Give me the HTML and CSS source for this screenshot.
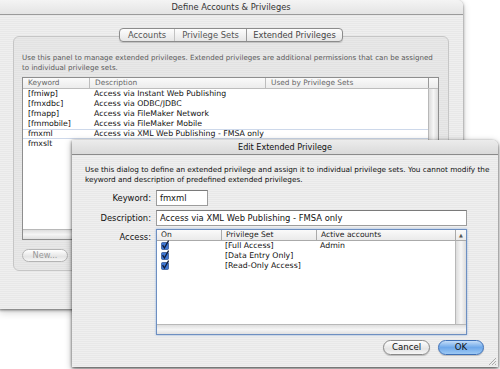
FILE: index.html
```html
<!DOCTYPE html>
<html lang="en">
<head>
<meta charset="UTF-8">
<title>Define Accounts &amp; Privileges</title>
<link rel="stylesheet" href="styles.css">
</head>
<body>
<div class="desk">

  <!-- back window -->
  <div class="window main">
    <div class="titlebar">Define Accounts &amp; Privileges</div>
    <div class="win-body">
      <div class="tabs">
        <span class="tab">Accounts</span>
        <span class="tab">Privilege Sets</span>
        <span class="tab on">Extended Privileges</span>
      </div>
      <div class="tabbox">
        <p class="intro">Use this panel to manage extended privileges. Extended privileges are additional permissions that can be assigned<br>to individual privilege sets.</p>
        <div class="list">
          <div class="list-head">
            <span>Keyword</span><span>Description</span><span>Used by Privilege Sets</span><span class="sb"></span>
          </div>
          <div class="list-body">
            <div class="rows">
              <div class="row"><span>[fmiwp]</span><span>Access via Instant Web Publishing</span><span></span></div>
              <div class="row"><span>[fmxdbc]</span><span>Access via ODBC/JDBC</span><span></span></div>
              <div class="row"><span>[fmapp]</span><span>Access via FileMaker Network</span><span></span></div>
              <div class="row"><span>[fmmobile]</span><span>Access via FileMaker Mobile</span><span></span></div>
              <div class="row sel"><span>fmxml</span><span>Access via XML Web Publishing - FMSA only</span><span></span></div>
              <div class="row"><span>fmxslt</span><span></span><span></span></div>
            </div>
            <div class="vtrack"></div>
          </div>
          <div class="hscroll"></div>
        </div>
        <span class="btn off">New...</span>
      </div>
    </div>
  </div>

  <!-- sheet dialog -->
  <div class="window dialog">
    <div class="titlebar">Edit Extended Privilege</div>
    <div class="dlg-body">
      <p class="intro">Use this dialog to define an extended privilege and assign it to individual privilege sets. You cannot modify the<br>keyword and description of predefined extended privileges.</p>
      <div class="form">
        <label>Keyword:</label>
        <span class="field short">fmxml</span>
        <label>Description:</label>
        <span class="field">Access via XML Web Publishing - FMSA only</span>
        <label class="top">Access:</label>
        <div class="grid-tbl">
          <div class="gt-head">
            <span>On</span><span>Privilege Set</span><span>Active accounts</span><span class="arrow">&#9650;</span>
          </div>
          <div class="gt-body">
            <div class="gt-rows">
              <div class="gt-row"><span><svg class="chk" viewBox="0 0 8 10" width="8" height="10"><rect x="0.5" y="2.5" width="7" height="7" rx="1" fill="#3f78d4" stroke="#1d3d78" stroke-width="0.6"/><path d="M1.6 5.2 L3.4 8 L7.6 0.6" fill="none" stroke="#101c3a" stroke-width="1.3"/></svg></span><span>[Full Access]</span><span>Admin</span></div>
              <div class="gt-row"><span><svg class="chk" viewBox="0 0 8 10" width="8" height="10"><rect x="0.5" y="2.5" width="7" height="7" rx="1" fill="#3f78d4" stroke="#1d3d78" stroke-width="0.6"/><path d="M1.6 5.2 L3.4 8 L7.6 0.6" fill="none" stroke="#101c3a" stroke-width="1.3"/></svg></span><span>[Data Entry Only]</span><span></span></div>
              <div class="gt-row"><span><svg class="chk" viewBox="0 0 8 10" width="8" height="10"><rect x="0.5" y="2.5" width="7" height="7" rx="1" fill="#3f78d4" stroke="#1d3d78" stroke-width="0.6"/><path d="M1.6 5.2 L3.4 8 L7.6 0.6" fill="none" stroke="#101c3a" stroke-width="1.3"/></svg></span><span>[Read-Only Access]</span><span></span></div>
            </div>
            <div class="vtrack"></div>
          </div>
          <div class="hscroll"></div>
        </div>
      </div>
      <div class="actions">
        <span class="btn">Cancel</span>
        <span class="btn default">OK</span>
      </div>
    </div>
    <svg class="grip" viewBox="0 0 9 9" width="9" height="9"><path d="M1 8 L8 1 M4 8 L8 4 M7 8 L8 7" stroke="#999" stroke-width="0.8"/></svg>
  </div>

</div>
</body>
</html>
```

FILE: styles.css
```css
* {
    box-sizing: border-box;
}

body {
    margin: 0;
    background: #fff;
    font-family: "DejaVu Sans", sans-serif;
    font-size: 7.6px;
    color: #111;
}

.desk {
    position: relative;
    width: 500px;
    height: 369px;
    overflow: hidden;
}

/* windows */
.window {
    position: absolute;
    display: flex;
    flex-direction: column;
    background: repeating-linear-gradient(#efefef 0 1px, #e8e8e8 1px 2px);
}

.main {
    left: -1px;
    top: 0;
    width: 464px;
    height: 309px;
    border-radius: 0 6px 0 0;
    box-shadow: 0 1px 3px rgba(0,0,0,0.55), 0 3px 8px rgba(0,0,0,0.2);
}

.dialog {
    left: 72px;
    top: 140px;
    width: 426px;
    height: 227px;
    border-radius: 0 6px 0 0;
    box-shadow: 0 1px 3px rgba(0,0,0,0.6), 0 2px 7px rgba(0,0,0,0.35);
}

.titlebar {
    height: 15px;
    line-height: 14px;
    text-align: center;
    font-size: 8.3px;
    color: #333;
    border-bottom: 1px solid #9a9a9a;
    background: linear-gradient(#f4f4f4, #e4e4e4);
    border-radius: 0 6px 0 0;
}

.dialog .titlebar {
    font-size: 8.1px;
    color: #111;
    background: linear-gradient(#ececec, #dadada);
    border-bottom-color: #8a8a8a;
}

.intro {
    margin: 0;
    line-height: 10px;
    white-space: nowrap;
}

/* back window */
.win-body {
    padding: 13px 14px 0;
}

.tabs {
    position: relative;
    z-index: 1;
    display: flex;
    width: 224px;
    height: 14px;
    margin: 0 auto;
    border: 1px solid #8c8c8c;
    border-radius: 4px;
    background: linear-gradient(#fdfdfd, #e6e6e6);
    box-shadow: 0 1px 1px rgba(0,0,0,0.15);
}

.tab {
    flex: 0 0 auto;
    line-height: 12px;
    font-size: 8.4px;
    color: #555;
    text-align: center;
    border-left: 1px solid #c2c2c2;
}

.tab:nth-child(1) { width: 54px; border-left: none; }
.tab:nth-child(2) { width: 72px; }
.tab:nth-child(3) { flex: 1; }

.tab.on {
    color: #444;
    border-left-color: #9a9a9a;
}

.tabbox {
    height: 235px;
    margin-top: -6px;
    padding: 16px 9px 0 8px;
    border: 1px solid #c6c6c6;
    border-radius: 6px;
    background: repeating-linear-gradient(#e8e8e8 0 1px, #e2e2e2 1px 2px);
}

.tabbox .intro {
    font-size: 7.1px;
    color: #5a5a5a;
    height: 20px;
}

.list {
    display: flex;
    flex-direction: column;
    height: 163px;
    margin-top: 4px;
    border: 1px solid #8e8e8e;
    background: #fff;
}

.list-head,
.row {
    display: grid;
    grid-template-columns: 66px 176px 1fr;
}

.list-head {
    grid-template-columns: 66px 176px 1fr 10px;
    height: 11px;
    line-height: 10px;
    font-size: 7.4px;
    color: #666;
    border-bottom: 1px solid #bdbdbd;
    background: linear-gradient(#fafafa, #ececec);
}

.list-head span {
    padding-left: 5px;
    border-left: 1px solid #bdbdbd;
}

.list-head span:first-child {
    border-left: none;
}

.list-head .sb {
    padding: 0;
    border-left-color: #999;
}

.list-body {
    flex: 1;
    display: flex;
}

.rows {
    flex: 1;
}

.row {
    height: 10px;
    line-height: 10px;
    font-size: 7.8px;
    color: #111;
}

.row span {
    padding-left: 5px;
    white-space: nowrap;
}

.row.sel {
    border-top: 1px solid #cdd8ea;
    border-bottom: 1px solid #cdd8ea;
    line-height: 8px;
}

.vtrack {
    width: 10px;
    border-left: 1px solid #b8b8b8;
    background: linear-gradient(90deg, #dcdcdc, #f6f6f6 50%, #dcdcdc);
}

.hscroll {
    height: 10px;
    border-top: 1px solid #b8b8b8;
    background: linear-gradient(#dedede, #f5f5f5 50%, #e0e0e0);
}

.btn {
    display: inline-block;
    width: 47px;
    height: 15px;
    line-height: 13px;
    text-align: center;
    font-size: 8.6px;
    border: 1px solid #8a8a8a;
    border-radius: 8px;
    background: linear-gradient(#ffffff, #e4e4e4 60%, #f6f6f6);
    box-shadow: 0 1px 1px rgba(0,0,0,0.2);
}

.btn.off {
    width: 46px;
    height: 13px;
    line-height: 11px;
    margin-top: 9px;
    font-size: 8.2px;
    color: #999;
    border-color: #b4b4b4;
    box-shadow: none;
}

.btn.default {
    width: 46px;
    border-color: #3d6fb6;
    background: linear-gradient(#c4ddf8, #6ea8ea 50%, #9cc8f4);
}

/* dialog */
.dlg-body {
    flex: 1;
    display: flex;
    flex-direction: column;
    padding: 10px 14px 0 13px;
}

.dlg-body .intro {
    font-size: 7.3px;
    height: 20px;
    line-height: 9.5px;
}

.form {
    display: grid;
    grid-template-columns: 66px 311px;
    column-gap: 5px;
    row-gap: 4px;
    margin-top: 5px;
    align-items: center;
}

.form label {
    text-align: right;
    font-size: 8.4px;
}

.form label.top {
    align-self: start;
    margin-top: 2px;
}

.field {
    height: 16px;
    line-height: 14px;
    padding-left: 3px;
    font-size: 8.4px;
    border: 1px solid #9c9c9c;
    border-top-color: #7a7a7a;
    background: #fff;
}

.field.short {
    width: 52px;
}

.grid-tbl {
    display: flex;
    flex-direction: column;
    height: 106px;
    margin-top: -1px;
    border: 1px solid #6d8fc1;
    box-shadow: 0 0 2px #8fb1e0;
    background: #fff;
}

.gt-head,
.gt-row {
    display: grid;
    grid-template-columns: 64px 95px 1fr;
}

.gt-head {
    grid-template-columns: 64px 95px 1fr 11px;
    height: 11px;
    line-height: 10px;
    color: #222;
    border-bottom: 1px solid #aaa;
    background: linear-gradient(#fafafa, #eaeaea);
}

.gt-head span {
    padding-left: 4px;
    border-left: 1px solid #aaa;
}

.gt-head span:first-child {
    border-left: none;
}

.gt-head .arrow {
    padding: 0;
    font-size: 5px;
    text-align: center;
    color: #555;
}

.gt-body {
    flex: 1;
    display: flex;
}

.gt-rows {
    flex: 1;
}

.gt-row {
    height: 10px;
    line-height: 10px;
    font-size: 7.8px;
}

.gt-row span {
    padding-left: 4px;
    white-space: nowrap;
}

.chk {
    display: block;
    margin-top: -1px;
}

.gt-body .vtrack {
    width: 11px;
}

.actions {
    display: flex;
    justify-content: flex-end;
    gap: 8px;
    margin-top: 5px;
}

.grip {
    position: absolute;
    right: 1px;
    bottom: 1px;
}
```
